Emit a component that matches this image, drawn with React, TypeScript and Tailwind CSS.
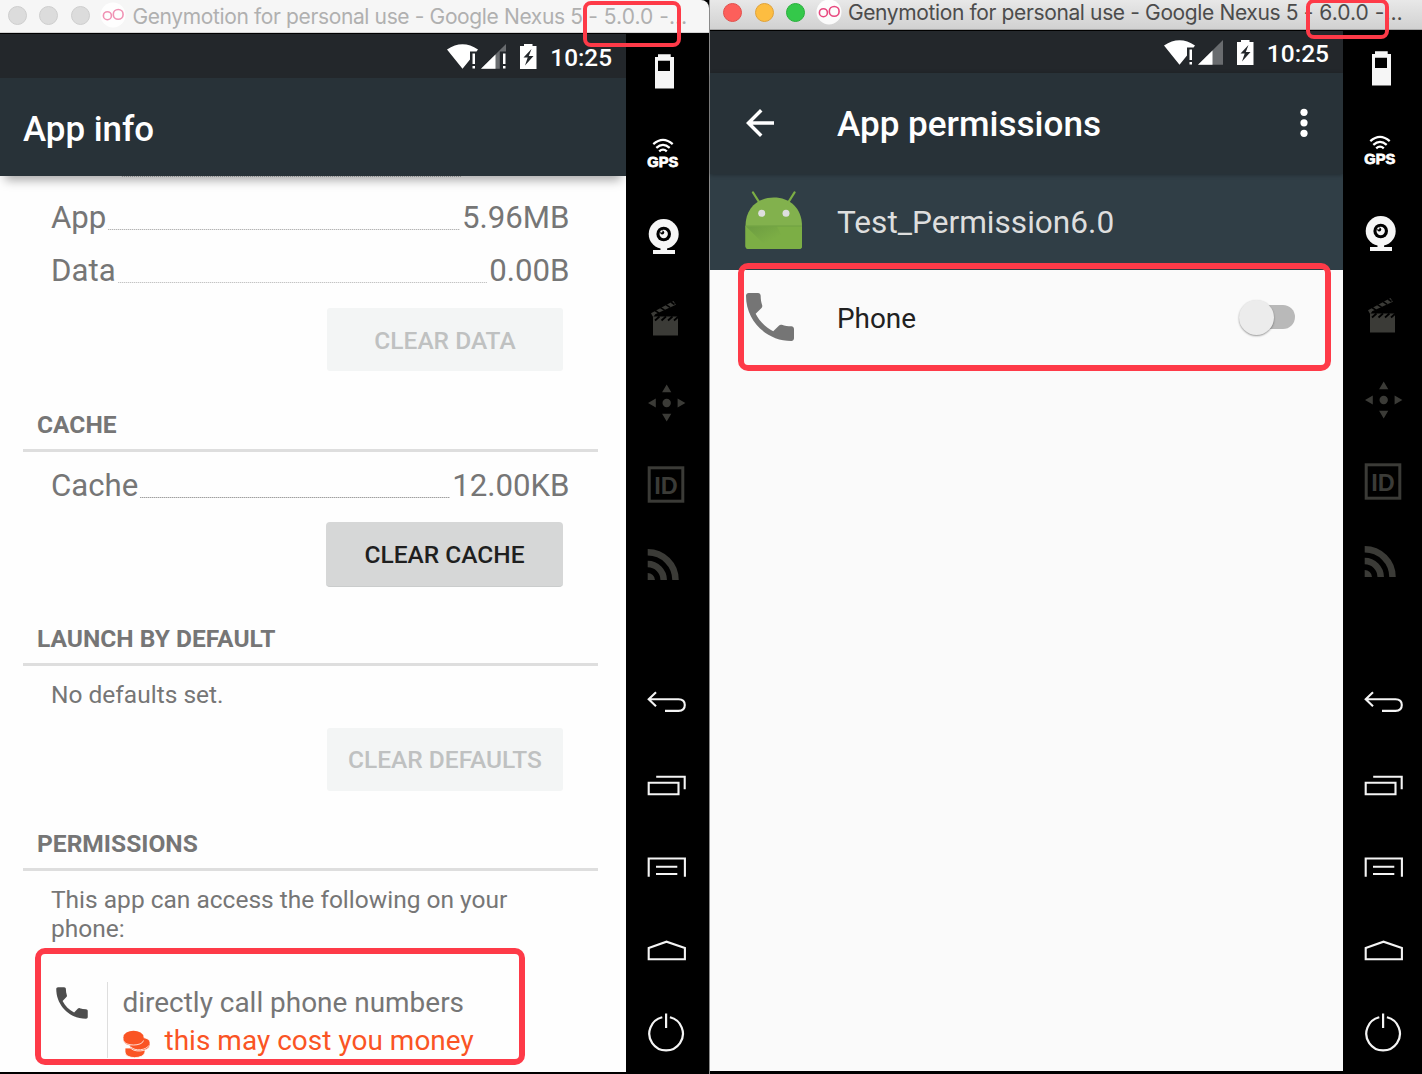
import type { ReactNode } from "react";

const PHONE =
  "M6.62 10.79c1.44 2.83 3.76 5.14 6.59 6.59l2.2-2.2c.27-.27.67-.36 1.02-.24 1.12.37 2.33.57 3.57.57.55 0 1 .45 1 1V20c0 .55-.45 1-1 1-9.39 0-17-7.61-17-17 0-.55.45-1 1-1h3.5c.55 0 1 .45 1 1 0 1.25.2 2.45.57 3.57.11.35.03.74-.25 1.02l-2.2 2.2z";

function Cell({ children }: { children: ReactNode }) {
  return (
    <svg viewBox="0 0 82 82" className="h-[82px] w-[82px] shrink-0">
      {children}
    </svg>
  );
}

function EmulatorBar() {
  return (
    <div className="-mt-[4px] flex flex-col">
      <Cell>
        <path fillRule="evenodd" fill="#f6f6f6" d="M32 24.3h12.7V27H48v31.5H29V27h3zM32 30.8V41h12V30.8z" />
      </Cell>
      <Cell>
        <g fill="none" stroke="#fff" strokeWidth="2.3">
          <path d="M27.3 32.2q9.7-8.6 19.4 0" />
          <path d="M30.3 35.8q6.7-5.8 13.4 0" />
          <path d="M33.2 39.4q3.8-3.6 7.6 0" />
        </g>
        <text x="21.3" y="55" fill="#fff" stroke="#fff" strokeWidth=".8" fontSize="14" fontWeight="700" textLength="31" lengthAdjust="spacingAndGlyphs" className="font-['Liberation_Sans',sans-serif]">GPS</text>
      </Cell>
      <Cell>
        <circle cx="37.7" cy="40" r="15" fill="#f6f6f6" />
        <path d="M34.5 53h6.6v3H49v4H27v-4h7.5z" fill="#f6f6f6" />
        <circle cx="37.7" cy="40" r="7.3" fill="#000" />
        <circle cx="37.7" cy="40" r="4.2" fill="#f6f6f6" />
        <circle cx="36.2" cy="38.5" r="2" fill="#000" />
        <circle cx="35.4" cy="37.5" r="1.1" fill="#f6f6f6" />
      </Cell>
      <Cell>
        <path d="M27 40.5h25v19H27z" fill="#3b3b37" />
        <path d="M25 37.3 47.5 25l2.4 3.8-20.700 9.500-2 3z" fill="#3b3b37" />
        <path d="m29 34.500 4 2.600M34.500 31.600l4 2.600M40 28.700l4 2.600M45 26l3.500 2.500" stroke="#000" strokeWidth="1.6" />
        <path d="m29 44.500 4.500-4M35.500 44.500l4.500-4M42 44.500l4.500-4M48 44.500l4.500-4" stroke="#000" strokeWidth="1.8" />
      </Cell>
      <Cell>
        <g fill="#3b3b37">
          <circle cx="40.7" cy="45" r="4.2" />
          <path d="m40.7 26.5 4.6 7.7h-9.2zM40.7 63.5l4.6-7.7h-9.2zM22 45l7.8-4.6v9.2zM59.4 45l-7.8-4.6v9.2z" />
        </g>
      </Cell>
      <Cell>
        <rect x="23.2" y="27.8" width="33.6" height="33.4" fill="none" stroke="#3b3b37" strokeWidth="3" />
        <text x="28.3" y="54" fill="#3b3b37" fontSize="24.5" fontWeight="700" textLength="23.5" lengthAdjust="spacingAndGlyphs" className="font-['Liberation_Sans',sans-serif]">ID</text>
      </Cell>
      <Cell>
        <g fill="none" stroke="#3b3b37" strokeWidth="6.5">
          <path d="M21.7 30.3A27.8 27.8 0 0 1 49.5 58" />
          <path d="M21.7 42A16 16 0 0 1 37.7 58" />
        </g>
        <path d="M21.7 51A7.5 7.5 0 0 1 29 58H21.7z" fill="#3b3b37" />
      </Cell>
    </div>
  );
}

function NavBar() {
  return (
    <div className="flex flex-col">
      <Cell>
        <path d="M30 32.3l-7.3 7L30 46.3M22.7 39.3H52.5q6.3 0 6.3 5.8t-6.3 5.8H39" fill="none" stroke="#f4f4f4" strokeWidth="2.1" />
      </Cell>
      <Cell>
        <path d="M22.7 40.7h29.8v11.5H22.7zM30.2 34.7h28.5V47.3" fill="none" stroke="#f4f4f4" strokeWidth="2.1" />
      </Cell>
      <Cell>
        <path d="M22.7 52.7V34.5h36.2v18.2M30 42.7h21.3M30 50h21.3" fill="none" stroke="#f4f4f4" strokeWidth="2.1" />
      </Cell>
      <Cell>
        <path d="M22.7 53.2V42L40.5 35.7 58.9 42v11.2z" fill="none" stroke="#f4f4f4" strokeWidth="2.1" />
      </Cell>
      <Cell>
        <path d="M36.3 29.3a16.8 16.8 0 1 0 7.6 0M40.1 25.5v14.5" fill="none" stroke="#f4f4f4" strokeWidth="2.2" />
      </Cell>
    </div>
  );
}

function GenymotionLogo({ color }: { color: string }) {
  return (
    <svg viewBox="0 0 26 26" className="h-[26px] w-[26px] shrink-0">
      <circle cx="13" cy="13" r="12.5" fill="#fff" fillOpacity=".9" />
      <g fill="none" stroke={color} strokeWidth="1.6">
        <circle cx="7.4" cy="13.7" r="4" />
        <circle cx="18.2" cy="12.4" r="4.9" />
      </g>
    </svg>
  );
}

function StatusIcons({ signalAlert }: { signalAlert: boolean }) {
  return (
    <svg viewBox="0 0 92 26" className="h-[26px] w-[92px] shrink-0">
      <path d="M0 5.5Q15.5-5 31 5.5l-1.5 2h-6.5V15.5L15.5 24.7z" fill="#fff" />
      <path d="M25.5 9.5H28V20h-2.5zM25.5 22H28v2.5h-2.5z" fill="#fff" />
      <path d="M34 24.8 59 0v24.8z" fill="#fff" fillOpacity=".32" />
      <path d="M34 24.8 48.5 10.4v14.4z" fill="#fff" />
      {signalAlert && (
        <g>
          <path d="M52.8 7.5H60v18h-7.2z" fill="#23272b" />
          <path d="M56 9.5h2.5V20H56zM56 22h2.5v2.5H56z" fill="#fff" />
        </g>
      )}
      <path d="M73 2h4V0h8.500v2h4v23H73z" fill="#fff" />
      <path d="m84.500 5-8 8.500h4.200L78 21.500l8.500-9.500h-4.700l2.700-7z" fill="#23272b" />
    </svg>
  );
}

function WindowTitle({ version, className }: { version: string; className: string }) {
  return (
    <span className={`ml-[6px] whitespace-pre font-['Inter',sans-serif] text-[21px] tracking-[-0.370px] ${className}`}>
      {"Genymotion for personal use - Google Nexus 5 "}
      <span className="tracking-[0.050px]">{`- ${version} -…`}</span>
    </span>
  );
}

function SectionHeading({ children, className }: { children: string; className: string }) {
  return (
    <div className={`ml-[23px] mr-[28px] shrink-0 border-b-[3px] border-[#dedede] pl-[14px] text-[24.550px] font-bold leading-[28px] ${className}`}>
      {children}
    </div>
  );
}

function SizeRow({ label, value, leader, className }: { label: string; value: string; leader: string; className: string }) {
  return (
    <div className={`flex h-[53px] shrink-0 pl-[51px] pr-[56.500px] text-[31.200px] leading-[52px] ${className}`}>
      <span>{label}</span>
      <span className={`ml-[2px] mr-[2px] h-px flex-1 ${leader}`} />
      <span>{value}</span>
    </div>
  );
}

function Coins() {
  return (
    <svg viewBox="0 0 28 29" className="h-[29px] w-[28px] shrink-0">
      <g fill="#fa5424" stroke="#fff" strokeWidth=".8">
        <path d="M2 18v4c0 7.5 19 7.5 20 0v-4z" />
        <path d="M7 13v4c2 6 19 5 20-1.5v-3C27 5.5 8 6 7 13z" />
        <path d="M8 17c4 4.5 15 3.5 18.5-2" fill="none" />
        <path d="M.5 7v3.5c1 7 19 7 20 0V7z" stroke="none" />
        <path d="M.5 10.5c1 6 19 6 20 0" fill="none" />
        <ellipse cx="10.5" cy="7" rx="10" ry="6.3" stroke="none" />
      </g>
    </svg>
  );
}

function AndroidIcon() {
  return (
    <svg viewBox="0 0 58 60" className="h-[60px] w-[58px] shrink-0">
      <path d="M8 1.5 14 11M49.5 1.5 43.5 11" stroke="#7cae45" strokeWidth="2.3" strokeLinecap="round" />
      <path d="M.5 35C.5 17 13 6.5 28.8 6.5S57 17 57 35v20q0 3-3 3H3.5q-3 0-3-3z" fill="#82b14d" />
      <path d="M.5 35H57v20q0 3-3 3H3.5q-3 0-3-3z" fill="#7cae45" />
      <defs>
        <linearGradient id="fold" x1="0" y1="0" x2="1" y2="1">
          <stop offset="0" stopColor="#6c9c41" />
          <stop offset=".6" stopColor="#7cae45" />
        </linearGradient>
      </defs>
      <path d="M1 35.5 24 58h20L32 35.5z" fill="url(#fold)" />
      <path d="M.5 35H57" stroke="#6f9f43" strokeWidth="1" />
      <circle cx="16.7" cy="22.3" r="3.5" fill="#dedede" />
      <circle cx="41" cy="22.3" r="3.5" fill="#dedede" />
    </svg>
  );
}

function AppInfoWindow() {
  return (
    <section className="flex h-full w-[709px] shrink-0 flex-col bg-black">
      <div className="flex h-[33px] shrink-0 items-start overflow-hidden rounded-tr-[8px] border-b border-[#d2d2d2] bg-[#f6f6f6] pl-[7.500px]">
        <div className="mt-[6px] flex gap-[12.700px]">
          <i className="size-[19px] rounded-full border border-[#cecece] bg-[#dcdcdc]" />
          <i className="size-[19px] rounded-full border border-[#cecece] bg-[#dcdcdc]" />
          <i className="size-[19px] rounded-full border border-[#cecece] bg-[#dcdcdc]" />
        </div>
        <div className="ml-[10.500px] mt-[2px]">
          <GenymotionLogo color="#f092b4" />
        </div>
        <WindowTitle version="5.0.0" className="leading-[33px] text-[#b0b0b0]" />
      </div>
      <div className="flex h-[1039px] pt-px">
        <div className="flex h-[1038px] w-[626px] shrink-0 flex-col overflow-hidden bg-[#fefefe] text-[#767676]">
          <div className="flex h-[44px] shrink-0 justify-end bg-[#23272b] pr-[14px] text-white">
            <div className="mt-[10px]">
              <StatusIcons signalAlert />
            </div>
            <span className="ml-[11px] text-[24.300px] font-medium leading-[48px]">10:25</span>
          </div>
          <h1 className="z-10 h-[98px] shrink-0 bg-[#283238] pl-[23px] text-[34.900px] font-medium leading-[103px] text-white shadow-[0_9px_10px_-5px_rgba(0,0,0,0.350)]">
            App info
          </h1>
          <div className="z-10 ml-[122px] h-px w-[339px] shrink-0 bg-[repeating-linear-gradient(90deg,#888_0_1px,#bbb_1px_2px)]" />
          <SizeRow label="App" value="5.96MB" leader="mt-[37px] bg-[repeating-linear-gradient(90deg,#b4b4b4_0_1px,#e4e4e4_1px_2px)]" className="mt-[15px]" />
          <SizeRow label="Data" value="0.00B" leader="mt-[37px] bg-[repeating-linear-gradient(90deg,#c4c4c4_0_1px,#ececec_1px_2px)]" className="" />
          <button className="ml-[327px] mt-[10px] h-[63px] w-[236px] shrink-0 rounded-[3px] bg-[#f3f5f5] pt-[3px] text-[24.500px] font-medium text-[#bfc1c1]">
            CLEAR DATA
          </button>
          <SectionHeading className="mt-[40px] h-[41px]">CACHE</SectionHeading>
          <SizeRow label="Cache" value="12.00KB" leader="mt-[38px] bg-[repeating-linear-gradient(90deg,#a0a0a0_0_1px,#d4d4d4_1px_2px)]" className="mt-[7px] leading-[53px]" />
          <button className="ml-[326px] mt-[10px] h-[65px] w-[237px] shrink-0 rounded-[4px] border-b border-[#cacccc] bg-[#d6d7d7] pt-[2px] text-[24.500px] font-medium text-[#1f1f1f]">
            CLEAR CACHE
          </button>
          <SectionHeading className="mt-[38px] h-[41px]">LAUNCH BY DEFAULT</SectionHeading>
          <p className="mt-[15px] h-[28px] shrink-0 pl-[51px] text-[24.500px] leading-[28px]">No defaults set.</p>
          <button className="ml-[327px] mt-[19px] h-[63px] w-[236px] shrink-0 rounded-[3px] bg-[#f3f5f5] pt-[2px] text-[24.500px] font-medium text-[#bfc1c1]">
            CLEAR DEFAULTS
          </button>
          <SectionHeading className="mt-[39px] h-[41px]">PERMISSIONS</SectionHeading>
          <p className="mt-[15px] h-[57px] shrink-0 pl-[51px] pr-[80px] text-[24.500px] leading-[28.500px]">
            This app can access the following on your phone:
          </p>
          <div className="mt-[39px] flex h-[76px] shrink-0 pl-[51px]">
            <svg viewBox="0 0 24 24" className="size-[42px] shrink-0" fill="#4d4d4d">
              <path d={PHONE} />
            </svg>
            <div className="ml-[14px] w-full border-l border-[#dedede] pl-[14.500px] text-[27.950px]">
              <div className="h-[40px] leading-[41px]">directly call phone numbers</div>
              <div className="flex h-[36px] leading-[37px] text-[#fa5424]">
                <div className="mt-[8px]">
                  <Coins />
                </div>
                <span className="ml-[14px] tracking-[0.040px]">this may cost you money</span>
              </div>
            </div>
          </div>
        </div>
        <div className="flex h-[1038px] w-[82px] shrink-0 flex-col justify-between overflow-hidden pb-[2px]">
          <EmulatorBar />
          <NavBar />
        </div>
      </div>
    </section>
  );
}

function AppPermissionsWindow() {
  return (
    <section className="flex h-full w-[713px] shrink-0 flex-col border-l border-[#8a8a8a] bg-black">
      <div className="flex h-[30px] shrink-0 items-start overflow-hidden border-b border-[#a6a6a6] bg-linear-to-b from-[#e8e8e8] to-[#d1d1d1] pl-[13px]">
        <div className="mt-[3px] flex gap-[12.700px]">
          <i className="size-[19px] rounded-full border border-[#e2504c] bg-[#fd5f5b]" />
          <i className="size-[19px] rounded-full border border-[#e0a33a] bg-[#fdbd41]" />
          <i className="size-[19px] rounded-full border border-[#29b03c] bg-[#34c84a]" />
        </div>
        <div className="ml-[10.500px] mt-[-1px]">
          <GenymotionLogo color="#e8487f" />
        </div>
        <WindowTitle version="6.0.0" className="leading-[26px] text-[#4c4c4c]" />
      </div>
      <div className="flex h-[1041px] pt-px">
        <div className="flex h-[1040px] w-[633px] shrink-0 flex-col bg-[#fafafa]">
          <div className="flex h-[42px] shrink-0 justify-end bg-[#23272b] pr-[14px] text-white">
            <div className="mt-[9px]">
              <StatusIcons signalAlert={false} />
            </div>
            <span className="ml-[11px] text-[24.500px] font-medium leading-[45px]">10:25</span>
          </div>
          <div className="z-10 flex h-[101px] shrink-0 items-center bg-[#283238] pb-[2px] pl-[29px] pr-[35px] text-white shadow-[0_1px_4px_rgba(0,0,0,0.300)]">
            <svg viewBox="0 0 24 24" className="size-[42px] shrink-0" fill="#fff">
              <path d="M20 11H7.83l5.59-5.59L12 4l-8 8 8 8 1.41-1.41L7.83 13H20v-2z" />
            </svg>
            <h1 className="ml-[56px] flex-1 pt-[3px] text-[35.100px] font-medium">App permissions</h1>
            <svg viewBox="0 0 8 30" className="h-[30px] w-[8px]" fill="#fff">
              <circle cx="4" cy="4.3" r="3.6" />
              <circle cx="4" cy="14.8" r="3.6" />
              <circle cx="4" cy="25.3" r="3.6" />
            </svg>
          </div>
          <div className="flex h-[96px] shrink-0 items-center bg-[#303e46] pl-[35px]">
            <div className="-mt-[3px]">
              <AndroidIcon />
            </div>
            <span className="ml-[34px] pt-px text-[31.600px] text-[#dedede]">Test_Permission6.0</span>
          </div>
          <div className="flex h-[94px] shrink-0 items-center pl-[28px] pr-[48px]">
            <svg viewBox="0 0 24 24" className="size-[64px] shrink-0" fill="#757575">
              <path d={PHONE} />
            </svg>
            <span className="ml-[35px] flex-1 pt-[4px] text-[27.900px] text-[#212121]">Phone</span>
            <div className="flex h-[24px] w-[50px] items-center rounded-full bg-[#b9b9b9]">
              <i className="-ml-[6px] size-[35px] shrink-0 rounded-full bg-[#ececec] shadow-[0_1px_2px_rgba(0,0,0,0.400)]" />
            </div>
          </div>
        </div>
        <div className="flex h-[1040px] w-[79px] shrink-0 flex-col justify-between overflow-hidden pb-px">
          <EmulatorBar />
          <NavBar />
        </div>
      </div>
    </section>
  );
}

export default function App() {
  return (
    <main className="relative flex h-[1074px] w-[1422px] overflow-hidden bg-black font-['Roboto',sans-serif]">
      <AppInfoWindow />
      <AppPermissionsWindow />
      <div className="absolute left-[583px] top-px h-[46px] w-[98px] rounded-[8px] border-[4.500px] border-[#fe3a48]" />
      <div className="absolute left-[1306px] top-[-1px] h-[40px] w-[83px] rounded-[8px] border-[4.500px] border-[#fe3a48]" />
      <div className="absolute left-[35px] top-[948px] h-[117px] w-[490px] rounded-[10px] border-[6px] border-[#fe3a48]" />
      <div className="absolute left-[738px] top-[263px] h-[108px] w-[593px] rounded-[10px] border-[6px] border-[#fe3a48]" />
    </main>
  );
}
